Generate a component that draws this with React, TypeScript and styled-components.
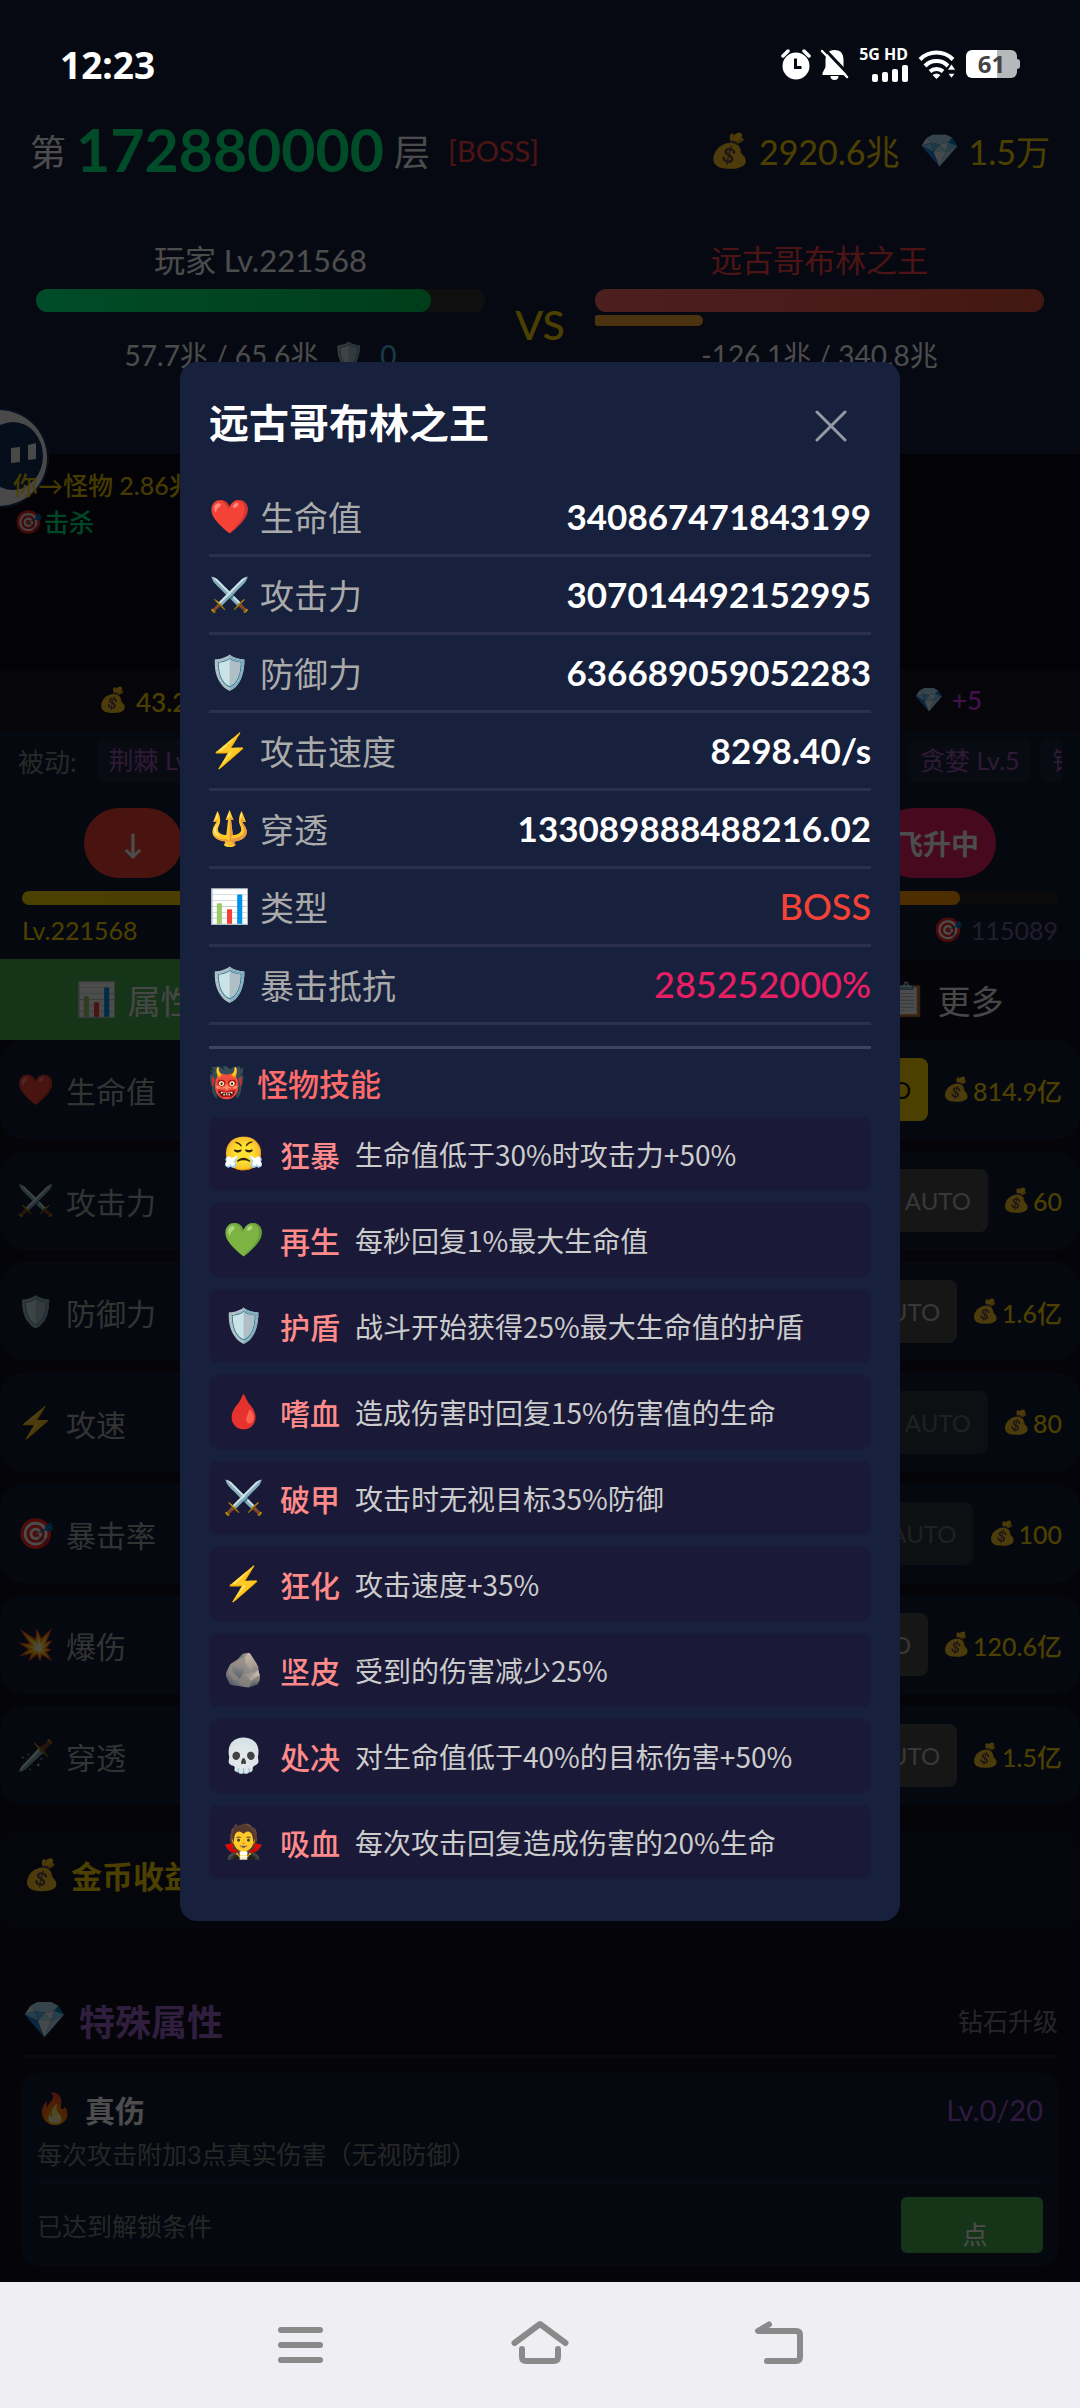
import React from 'react';
import styled, { createGlobalStyle, css } from 'styled-components';

const GlobalStyle = createGlobalStyle`
  * { box-sizing: border-box; }
  body {
    margin: 0;
    background: #0f0f1e;
    color: #fff;
    font-family: Lato, 'Noto Sans CJK SC', 'Noto Color Emoji', sans-serif;
  }
  h2, h3, p, ul, dl, dd { margin: 0; padding: 0; font-weight: 400; }
  ul { list-style: none; }
  button { border: 0; padding: 0; font: inherit; color: inherit; background: none; cursor: pointer; }
`;

const Phone = styled.div`
  display: flex;
  flex-direction: column;
  height: 100vh;
`;

const Screen = styled.div`
  position: relative;
  flex: 1;
  min-height: 0;
  overflow: hidden;
  background: #0f0f1e;
`;

const Emoji = styled.span<{ $size: number; $box: number }>`
  display: inline-flex;
  flex: none;
  justify-content: center;
  width: ${(p) => p.$box}px;
  font-family: 'Noto Color Emoji', sans-serif;
  font-size: ${(p) => p.$size}px;
  font-weight: 400;
  line-height: 1;
  white-space: nowrap;
`;

/* ---------- status bar ---------- */

const StatusBar = styled.header`
  position: relative;
  z-index: 3;
  display: flex;
  align-items: center;
  justify-content: space-between;
  height: 128px;
  padding: 0 60px;
`;

const Clock = styled.span`
  font-family: 'Noto Sans', sans-serif;
  font-size: 37px;
  font-weight: 700;
`;

const StatusIcons = styled.div`
  display: flex;
  align-items: center;
  gap: 10px;
`;

const Network = styled.div`
  display: flex;
  flex-direction: column;
  align-items: flex-end;
  gap: 4px;
  font-family: 'Noto Sans', sans-serif;
  font-size: 16px;
  font-weight: 700;
  line-height: 14px;
`;

const Battery = styled.div`
  display: flex;
  align-items: center;
`;

const BatteryBody = styled.div`
  width: 51px;
  height: 28px;
  border-radius: 6px;
  background: linear-gradient(90deg, #fff 61%, #b6b8bc 61%);
  color: #444;
  font-family: 'Noto Sans', sans-serif;
  font-size: 24px;
  font-weight: 700;
  line-height: 28px;
  text-align: center;
`;

const BatteryTip = styled.div`
  width: 3px;
  height: 10px;
  border-radius: 0 3px 3px 0;
  background: #b6b8bc;
`;

/* ---------- battle header ---------- */

const BattlePanel = styled.section`
  height: 454px;
  background: #16213e;
`;

const TopLine = styled.div`
  display: flex;
  align-items: center;
  justify-content: space-between;
  height: 44px;
  padding: 0 30px;
  white-space: nowrap;
`;

const Floor = styled.div`
  display: flex;
  align-items: center;
  gap: 10px;
  font-size: 36px;
`;

const FloorNumber = styled.strong`
  color: #00ff88;
  font-size: 59px;
  font-weight: 700;
  line-height: 60px;
`;

const BossTag = styled.span`
  margin-left: 8px;
  color: #ff4444;
  font-size: 29px;
`;

const Wallet = styled.div`
  display: flex;
  align-items: center;
  gap: 20px;
  color: #ffd700;
  font-size: 34px;
`;

const Coin = styled.span`
  display: flex;
  align-items: center;
  gap: 9px;
`;

const Fight = styled.div`
  display: grid;
  grid-template-columns: 1fr 110px 1fr;
  padding: 65px 36px 0;
`;

const Fighter = styled.div`
  display: flex;
  flex-direction: column;
  align-items: center;
`;

const FighterName = styled.div<{ $enemy?: boolean }>`
  color: ${(p) => (p.$enemy ? '#ff4444' : '#fff')};
  font-size: 31px;
  line-height: 46px;
`;

const HpTrack = styled.div`
  width: 100%;
  height: 23px;
  margin-top: 6px;
  border-radius: 12px;
  background: #333;
`;

const HpFill = styled.div<{ $enemy?: boolean }>`
  height: 100%;
  border-radius: 12px;
  background: ${(p) =>
    p.$enemy
      ? 'linear-gradient(90deg, #ff6b6b, #e0523f)'
      : 'linear-gradient(90deg, #00ff88, #00cc55)'};
`;

const ShieldSlot = styled.div`
  width: 100%;
  height: 11px;
  margin-top: 3px;
`;

const ShieldFill = styled.div`
  height: 100%;
  border-radius: 3px 6px 6px 3px;
  background: #ffaa33;
`;

const HpText = styled.div`
  display: flex;
  align-items: center;
  gap: 10px;
  margin-top: 9px;
  font-size: 28px;
  line-height: 40px;
`;

const ShieldValue = styled.span`
  color: #4fc3f7;
`;

const Versus = styled.div`
  padding-top: 64px;
  color: #ffd700;
  font-size: 41px;
  font-weight: 500;
  line-height: 48px;
  text-align: center;
`;

/* ---------- log, rewards, passives ---------- */

const Log = styled.section`
  position: relative;
  height: 215px;
  padding: 13px;
  background: #0a0a18;
  font-size: 25px;
  line-height: 37px;
`;

const LogLine = styled.p<{ $kill?: boolean }>`
  position: relative;
  display: flex;
  align-items: center;
  color: ${(p) => (p.$kill ? '#00ff88' : '#ffd700')};
  font-weight: 500;
  opacity: 0.9;
`;

const Assistant = styled.svg`
  position: absolute;
  top: -46px;
  left: 0;
  opacity: 0.95;
`;

const Rewards = styled.section`
  display: flex;
  align-items: center;
  justify-content: space-between;
  height: 62px;
  padding: 0 98px;
  background: #151522;
  font-size: 26px;
  font-weight: 500;
`;

const Reward = styled.span<{ $color: string }>`
  display: flex;
  align-items: center;
  gap: 8px;
  color: ${(p) => p.$color};
`;

const Controls = styled.section`
  height: 228px;
  background: #131c34;
`;

const Passives = styled.div`
  display: flex;
  align-items: center;
  gap: 20px;
  padding: 8px 18px 0;
  color: #888;
  font-size: 26px;
`;

const ChipStrip = styled.div`
  display: flex;
  flex: 1;
  justify-content: space-between;
  min-width: 0;
`;

const ChipGroup = styled.div<{ $clip?: number }>`
  display: flex;
  gap: 9px;
  overflow: hidden;
  ${(p) => p.$clip && css`width: ${p.$clip}px;`}
`;

const Chip = styled.span`
  flex: none;
  padding: 0 12px;
  border-radius: 8px;
  background: rgba(255, 255, 255, 0.05);
  color: #9b59b6;
  font-size: 25px;
  line-height: 43px;
  white-space: nowrap;
`;

const Actions = styled.div`
  display: flex;
  justify-content: space-between;
  padding: 26px 84px 0;
`;

const Pill = styled.button<{ $color: string; $wide?: boolean }>`
  width: ${(p) => (p.$wide ? 118 : 98)}px;
  height: 70px;
  border-radius: 35px;
  background: ${(p) => p.$color};
  font-size: 28px;
  font-weight: 700;
`;

const ExpTrack = styled.div`
  height: 14px;
  margin: 13px 22px 0;
  border-radius: 7px;
  background: #262626;
`;

const ExpFill = styled.div`
  height: 100%;
  border-radius: 7px;
  background: linear-gradient(90deg, #ffd700, #ff9800);
`;

const ExpLabels = styled.div`
  display: flex;
  justify-content: space-between;
  padding: 6px 22px 0;
  color: #ffd700;
  font-size: 25px;
  line-height: 38px;
`;

const Target = styled.span`
  display: flex;
  align-items: center;
  gap: 9px;
  color: #73609c;
`;

/* ---------- tabs and upgrade list ---------- */

const Tabs = styled.nav`
  display: flex;
  justify-content: space-between;
`;

const Tab = styled.button<{ $active?: boolean }>`
  display: flex;
  align-items: center;
  justify-content: center;
  gap: 11px;
  width: 25%;
  height: 81px;
  background: ${(p) => (p.$active ? '#4caf50' : 'transparent')};
  color: #eee;
  font-size: 33px;
`;

const UpgradeList = styled.ul`
  display: flex;
  flex-direction: column;
  gap: 12px;
`;

const Upgrade = styled.li`
  display: flex;
  align-items: center;
  height: 99px;
  padding: 0 18px;
  border-radius: 24px;
  background: #131c34;
`;

const UpgradeName = styled.span`
  flex: 1;
  margin-left: 12px;
  color: #aaa;
  font-size: 30px;
`;

const Auto = styled.button<{ $state: 'on' | 'off' | 'locked' }>`
  height: 63px;
  padding: 0 17px;
  border-radius: 8px;
  font-size: 24px;
  ${(p) =>
    p.$state === 'on'
      ? css`background: #ffd700; color: #111;`
      : css`background: #4c4c4c; color: #bbb;`}
  opacity: ${(p) => (p.$state === 'locked' ? 0.5 : 1)};
`;

const Price = styled.span`
  display: flex;
  align-items: center;
  gap: 2px;
  margin-left: 15px;
  color: #ffd700;
  font-size: 25px;
  font-weight: 500;
`;

const Income = styled.section`
  display: flex;
  align-items: center;
  gap: 11px;
  height: 101px;
  margin-top: 25px;
  padding: 0 24px 12px;
  border-radius: 24px;
  background: #121428;
  color: #ffd700;
  font-size: 31px;
  font-weight: 700;
`;

const Special = styled.section`
  margin: 54px 22px 0;
`;

const SpecialHead = styled.div`
  display: flex;
  align-items: center;
  justify-content: space-between;
  height: 73px;
  border-bottom: 3px solid #1e1e33;
`;

const SpecialTitle = styled.h2`
  display: flex;
  align-items: center;
  gap: 12px;
  color: #a066d0;
  font-size: 36px;
  font-weight: 700;
`;

const Muted = styled.span`
  color: #808080;
  font-size: 25px;
`;

const SpecialCard = styled.article`
  height: 193px;
  margin: 15px 0 12px;
  padding: 12px 15px 0;
  border-radius: 15px;
  background: #131c34;
`;

const CardRow = styled.div<{ $tall?: boolean }>`
  display: flex;
  align-items: center;
  justify-content: space-between;
  height: ${(p) => (p.$tall ? 84 : 48)}px;
`;

const CardName = styled.h3`
  display: flex;
  align-items: center;
  gap: 12px;
  font-size: 30px;
  font-weight: 700;
`;

const CardLevel = styled.span`
  color: #9b59d0;
  font-size: 29px;
`;

const CardNote = styled.p`
  height: 50px;
  padding-top: 3px;
  border-bottom: 3px solid #1b2440;
  color: #808080;
  font-size: 25px;
  line-height: 36px;
`;

const Spend = styled.button`
  width: 142px;
  height: 56px;
  padding: 18px 0 0 6px;
  border-radius: 6px;
  background: #4caf50;
  font-size: 25px;
  line-height: 38px;
`;

/* ---------- dialog ---------- */

const Overlay = styled.div`
  position: absolute;
  inset: 0;
  z-index: 2;
  display: flex;
  align-items: center;
  justify-content: center;
  background: rgba(0, 0, 0, 0.7);
`;

const Dialog = styled.section`
  width: 66.67%;
  padding: 29px 29px 42px;
  border-radius: 17px;
  background: #17213d;
`;

const DialogHead = styled.div`
  display: flex;
  align-items: center;
  justify-content: space-between;
  height: 70px;
  margin-bottom: 18px;
  padding-right: 24px;
`;

const DialogTitle = styled.h2`
  font-size: 40px;
  font-weight: 700;
  line-height: 60px;
  padding-bottom: 6px;
`;

const Close = styled.button`
  display: flex;
`;

const Stat = styled.div`
  display: flex;
  align-items: center;
  height: 78px;
  border-bottom: 3px solid #2b2f50;
`;

const StatName = styled.dt`
  display: flex;
  flex: 1;
  align-items: center;
  gap: 9px;
  color: #aaa;
  font-size: 34px;
`;

const StatValue = styled.dd<{ $color?: string }>`
  color: ${(p) => p.$color || '#fff'};
  font-size: ${(p) => (p.$color ? 36 : 35)}px;
  font-weight: ${(p) => (p.$color ? 500 : 700)};
`;

const Skills = styled.div`
  margin-top: 21px;
  border-top: 3px solid #3b4264;
`;

const SkillsTitle = styled.h3`
  display: flex;
  align-items: center;
  gap: 12px;
  height: 68px;
  color: #ff6b6b;
  font-size: 31px;
  font-weight: 500;
`;

const SkillList = styled.ul`
  display: flex;
  flex-direction: column;
  gap: 12px;
`;

const Skill = styled.li`
  display: flex;
  align-items: center;
  height: 74px;
  padding: 0 14px;
  border-radius: 9px;
  background: #1a1a38;
  font-family: 'Noto Sans CJK SC', sans-serif;
`;

const SkillName = styled.strong`
  margin: 0 15px;
  color: #ff8a8a;
  font-size: 30px;
  font-weight: 500;
`;

const SkillText = styled.span`
  color: #ccc;
  font-size: 28px;
  white-space: nowrap;
`;

/* ---------- system navigation ---------- */

const NavBar = styled.nav`
  display: flex;
  align-items: center;
  justify-content: center;
  gap: 180px;
  height: 126px;
  background: #efeef3;
`;

const NavButton = styled.button`
  display: flex;
`;

const STATS = [
  { icon: '❤️', name: '生命值', value: '340867471843199' },
  { icon: '⚔️', name: '攻击力', value: '307014492152995' },
  { icon: '🛡️', name: '防御力', value: '636689059052283' },
  { icon: '⚡', name: '攻击速度', value: '8298.40/s' },
  { icon: '🔱', name: '穿透', value: '133089888488216.02' },
  { icon: '📊', name: '类型', value: 'BOSS', color: '#f44336' },
  { icon: '🛡️', name: '暴击抵抗', value: '285252000%', color: '#e91e63' },
];

const SKILLS = [
  { icon: '😤', name: '狂暴', text: '生命值低于30%时攻击力+50%' },
  { icon: '💚', name: '再生', text: '每秒回复1%最大生命值' },
  { icon: '🛡️', name: '护盾', text: '战斗开始获得25%最大生命值的护盾' },
  { icon: '🩸', name: '嗜血', text: '造成伤害时回复15%伤害值的生命' },
  { icon: '⚔️', name: '破甲', text: '攻击时无视目标35%防御' },
  { icon: '⚡', name: '狂化', text: '攻击速度+35%' },
  { icon: '🪨', name: '坚皮', text: '受到的伤害减少25%' },
  { icon: '💀', name: '处决', text: '对生命值低于40%的目标伤害+50%' },
  { icon: '🧛', name: '吸血', text: '每次攻击回复造成伤害的20%生命' },
];

const UPGRADES: { icon: string; name: string; price: string; state: 'on' | 'off' | 'locked' }[] = [
  { icon: '❤️', name: '生命值', price: '814.9亿', state: 'on' },
  { icon: '⚔️', name: '攻击力', price: '60', state: 'off' },
  { icon: '🛡️', name: '防御力', price: '1.6亿', state: 'off' },
  { icon: '⚡', name: '攻速', price: '80', state: 'locked' },
  { icon: '🎯', name: '暴击率', price: '100', state: 'locked' },
  { icon: '💥', name: '爆伤', price: '120.6亿', state: 'off' },
  { icon: '🗡️', name: '穿透', price: '1.5亿', state: 'off' },
];

const AlarmIcon = () => (
  <svg width="30" height="31" viewBox="0 0 30 31">
    <circle cx="15" cy="17" r="13.5" fill="#fff" />
    <path d="M2 7 7 2M28 7l-5-5" stroke="#fff" strokeWidth="3.5" strokeLinecap="round" />
    <path d="M14.5 9.5v9h6" fill="none" stroke="#070a13" strokeWidth="3" />
  </svg>
);

const MutedBellIcon = () => (
  <svg width="28" height="31" viewBox="0 0 28 31">
    <path d="M13.5 1C7 1 4.500 6 4.500 11v7L1.500 24v2h24v-2l-3-5v-8C22.500 5 20 1 13.500 1z" fill="#fff" />
    <path d="M9.500 27a4 4 0 0 0 8 0z" fill="#fff" />
    <path d="M3.500 0 28 26" stroke="#070a13" strokeWidth="3" />
    <path d="M1 2 26 28" stroke="#fff" strokeWidth="2.500" strokeLinecap="round" />
  </svg>
);

const SignalIcon = () => (
  <svg width="36" height="17" viewBox="0 0 36 17" fill="#fff">
    <rect x="0" y="9" width="6" height="8" rx="2" />
    <rect x="10" y="7" width="6" height="10" rx="2" />
    <rect x="20" y="4" width="6" height="13" rx="2" />
    <rect x="30" y="0" width="6" height="17" rx="2" />
  </svg>
);

const WifiIcon = () => (
  <svg width="38" height="30" viewBox="0 0 38 30">
    <g fill="none" stroke="#fff" strokeWidth="4">
      <path d="M2 10.500a23 23 0 0 1 33 0" />
      <path d="M7 17a16 16 0 0 1 23 0" />
      <path d="M12 22.500a9.500 9.500 0 0 1 13 0" />
    </g>
    <path d="M14.500 26q4-3 8 0l-4 4z" fill="#fff" />
    <path d="M33.500 14l5 7.500h-10zM33.500 30l4.500-6h-9z" fill="#fff" stroke="#070a13" strokeWidth="1.500" />
  </svg>
);

const CloseIcon = () => (
  <svg width="32" height="32" viewBox="0 0 32 32" stroke="#9598a5" strokeWidth="3" strokeLinecap="round">
    <path d="M2 2 30 30M30 2 2 30" />
  </svg>
);

function Battle() {
  return (
    <>
      <TopLine>
        <Floor>
          <span>第</span>
          <FloorNumber>172880000</FloorNumber>
          <span>层</span>
          <BossTag>[BOSS]</BossTag>
        </Floor>
        <Wallet>
          <Coin><Emoji $size={33} $box={40}>💰</Emoji>2920.6兆</Coin>
          <Coin><Emoji $size={33} $box={40}>💎</Emoji>1.5万</Coin>
        </Wallet>
      </TopLine>
      <Fight>
        <Fighter>
          <FighterName>玩家 Lv.221568</FighterName>
          <HpTrack><HpFill style={{ width: '88%' }} /></HpTrack>
          <ShieldSlot />
          <HpText>
            57.7兆 / 65.6兆
            <Emoji $size={25} $box={42}>🛡️</Emoji>
            <ShieldValue>0</ShieldValue>
          </HpText>
        </Fighter>
        <Versus>VS</Versus>
        <Fighter>
          <FighterName $enemy>远古哥布林之王</FighterName>
          <HpTrack><HpFill $enemy style={{ width: '100%' }} /></HpTrack>
          <ShieldSlot><ShieldFill style={{ width: '24%' }} /></ShieldSlot>
          <HpText>-126.1兆 / 340.8兆</HpText>
        </Fighter>
      </Fight>
    </>
  );
}

export default function App() {
  return (
    <Phone>
      <GlobalStyle />
      <Screen>
        <BattlePanel>
          <StatusBar>
            <Clock>12:23</Clock>
            <StatusIcons>
              <AlarmIcon />
              <MutedBellIcon />
              <Network>5G HD<SignalIcon /></Network>
              <WifiIcon />
              <Battery><BatteryBody>61</BatteryBody><BatteryTip /></Battery>
            </StatusIcons>
          </StatusBar>
          <Battle />
        </BattlePanel>

        <Log>
          <Assistant width="52" height="104" viewBox="0 0 52 104">
            <circle cx="-1" cy="50" r="50" fill="#1c3560" />
            <circle cx="-1" cy="50" r="48" fill="#fff" />
            <ellipse cx="13" cy="48" rx="30" ry="34" fill="#16305c" />
            <path d="M11 40l9-1v15l-9 1zM28 37l8-2v16l-8 1z" fill="#fff" />
          </Assistant>
          <LogLine>你→怪物 2.86兆</LogLine>
          <LogLine $kill><Emoji $size={23} $box={31}>🎯</Emoji>击杀</LogLine>
        </Log>

        <Rewards>
          <Reward $color="#ffd700"><Emoji $size={24} $box={30}>💰</Emoji>43.2兆</Reward>
          <Reward $color="#d63cf0"><Emoji $size={24} $box={30}>💎</Emoji>+5</Reward>
        </Rewards>

        <Controls>
          <Passives>
            被动:
            <ChipStrip>
              <ChipGroup><Chip>荆棘 Lv.5</Chip></ChipGroup>
              <ChipGroup $clip={154}><Chip>贪婪 Lv.5</Chip><Chip>锋</Chip></ChipGroup>
            </ChipStrip>
          </Passives>
          <Actions>
            <Pill $color="#f44336">↓</Pill>
            <Pill $color="#e91e63" $wide>飞升中</Pill>
          </Actions>
          <ExpTrack><ExpFill style={{ width: '90.5%' }} /></ExpTrack>
          <ExpLabels>
            Lv.221568
            <Target><Emoji $size={24} $box={28}>🎯</Emoji>115089</Target>
          </ExpLabels>
        </Controls>

        <Tabs>
          <Tab $active><Emoji $size={33} $box={40}>📊</Emoji>属性</Tab>
          <Tab><Emoji $size={33} $box={40}>📋</Emoji>更多</Tab>
        </Tabs>

        <UpgradeList>
          {UPGRADES.map((u) => (
            <Upgrade key={u.name}>
              <Emoji $size={30} $box={36}>{u.icon}</Emoji>
              <UpgradeName>{u.name}</UpgradeName>
              <Auto $state={u.state}>AUTO</Auto>
              <Price><Emoji $size={23} $box={28}>💰</Emoji>{u.price}</Price>
            </Upgrade>
          ))}
        </UpgradeList>

        <Income><Emoji $size={30} $box={36}>💰</Emoji>金币收益</Income>

        <Special>
          <SpecialHead>
            <SpecialTitle><Emoji $size={36} $box={45}>💎</Emoji>特殊属性</SpecialTitle>
            <Muted>钻石升级</Muted>
          </SpecialHead>
          <SpecialCard>
            <CardRow>
              <CardName><Emoji $size={30} $box={36}>🔥</Emoji>真伤</CardName>
              <CardLevel>Lv.0/20</CardLevel>
            </CardRow>
            <CardNote>每次攻击附加3点真实伤害（无视防御）</CardNote>
            <CardRow $tall>
              <Muted>已达到解锁条件</Muted>
              <Spend>点</Spend>
            </CardRow>
          </SpecialCard>
          <SpecialCard />
        </Special>

        <Overlay>
          <Dialog role="dialog" aria-labelledby="monster-name">
            <DialogHead>
              <DialogTitle id="monster-name">远古哥布林之王</DialogTitle>
              <Close aria-label="关闭"><CloseIcon /></Close>
            </DialogHead>
            <dl>
              {STATS.map((s) => (
                <Stat key={s.name}>
                  <StatName><Emoji $size={33} $box={42}>{s.icon}</Emoji>{s.name}</StatName>
                  <StatValue $color={s.color}>{s.value}</StatValue>
                </Stat>
              ))}
            </dl>
            <Skills>
              <SkillsTitle><Emoji $size={30} $box={36}>👹</Emoji>怪物技能</SkillsTitle>
              <SkillList>
                {SKILLS.map((s) => (
                  <Skill key={s.name}>
                    <Emoji $size={33} $box={42}>{s.icon}</Emoji>
                    <SkillName>{s.name}</SkillName>
                    <SkillText>{s.text}</SkillText>
                  </Skill>
                ))}
              </SkillList>
            </Skills>
          </Dialog>
        </Overlay>
      </Screen>

      <NavBar>
        <NavButton aria-label="菜单">
          <svg width="60" height="44" viewBox="270 2323 60 44" stroke="#8a8a8a" strokeWidth="6" strokeLinecap="round">
            <path d="M281 2330h39M281 2345h39M281 2360h39" />
          </svg>
        </NavButton>
        <NavButton aria-label="主页">
          <svg width="60" height="50" viewBox="510 2319 60 50" fill="none" stroke="#8a8a8a" strokeWidth="6" strokeLinecap="round" strokeLinejoin="round">
            <path d="M514.500 2342 540 2323l25.500 19M522 2348v8q0 4 4 4h28q4 0 4-4v-8" />
          </svg>
        </NavButton>
        <NavButton aria-label="返回">
          <svg width="60" height="50" viewBox="751 2319 60 50" fill="none" stroke="#8a8a8a" strokeWidth="6" strokeLinecap="round" strokeLinejoin="round">
            <path d="M770 2323.500 759 2330h38q4 0 4 4v22q0 4-4 4h-29" />
          </svg>
        </NavButton>
      </NavBar>
    </Phone>
  );
}
